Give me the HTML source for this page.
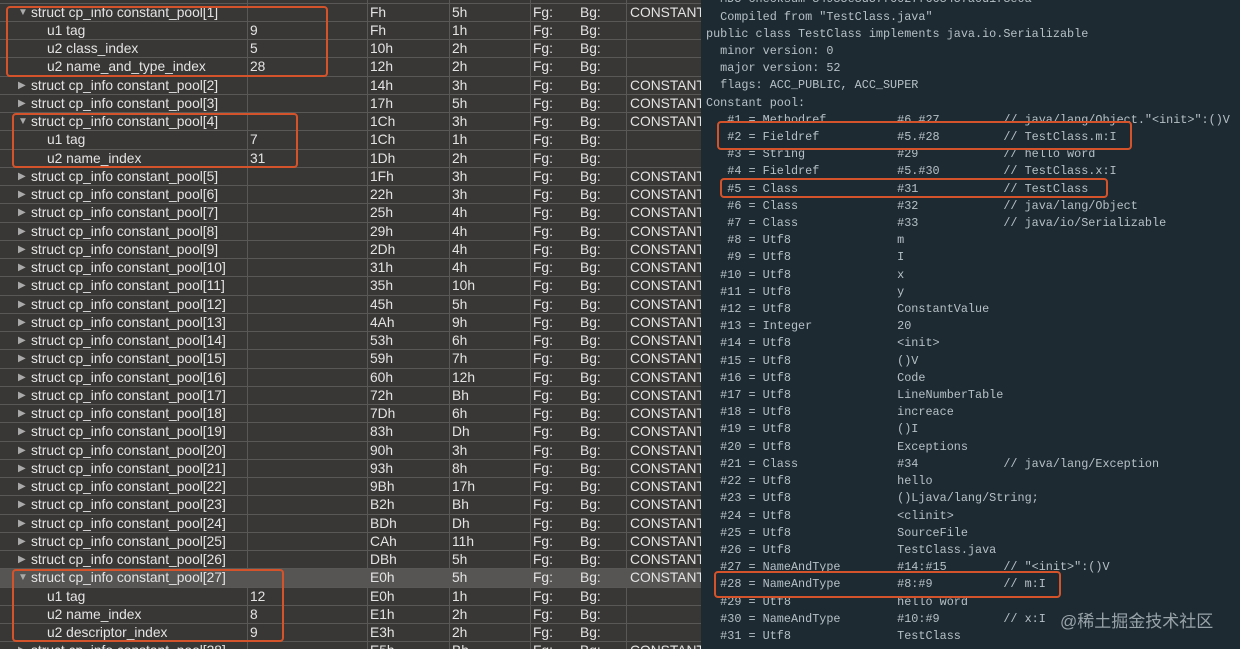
<!DOCTYPE html>
<html><head><meta charset="utf-8"><style>
*{margin:0;padding:0;box-sizing:border-box}
html,body{width:1240px;height:649px;overflow:hidden}
body{background:#1e2a32;position:relative;font-family:"Liberation Sans",sans-serif}
#left{position:absolute;left:0;top:0;width:701px;height:649px;background:#393735;overflow:hidden}
#rows{position:absolute;left:0;top:-14.76px;width:701px}
.r{height:18.26px;border-bottom:1px solid #5a5856;position:relative;font-size:13.8px;color:#e4e4e4;line-height:18px;white-space:nowrap}
.r span{position:absolute;top:0}
.n{left:31px}.c .n{left:47px}
.t{left:18px;font-size:10px;color:#aaa}
.v{left:250px}.s{left:370px}.z{left:452px}.fg{left:533px}.bg{left:580px}.k{left:630px}
.sel{background:#575553}
.vl{position:absolute;top:0;width:1px;height:649px;background:#5a5856}
#term{position:absolute;left:706px;top:-8.6px;font-family:"Liberation Mono",monospace;font-size:11.8px;line-height:17.2px;color:#b5c1c6;white-space:pre}
.box{position:absolute;border:2.5px solid #d4532a;border-radius:4px}
#wm{position:absolute;left:1060px;top:607px;font-family:"Liberation Sans","Noto Sans CJK SC",sans-serif;font-size:17px;color:#97a3a8}
</style></head><body>
<div id="left">
<div class="vl" style="left:247px"></div><div class="vl" style="left:367px"></div><div class="vl" style="left:449px"></div><div class="vl" style="left:530px"></div><div class="vl" style="left:626px"></div>
<div id="rows">
<div class="r"></div>
<div class="r"><span class="t">▼</span><span class="n">struct cp_info constant_pool[1]</span><span class="s">Fh</span><span class="z">5h</span><span class="fg">Fg:</span><span class="bg">Bg:</span><span class="k">CONSTANT</span></div>
<div class="r c"><span class="n">u1 tag</span><span class="v">9</span><span class="s">Fh</span><span class="z">1h</span><span class="fg">Fg:</span><span class="bg">Bg:</span></div>
<div class="r c"><span class="n">u2 class_index</span><span class="v">5</span><span class="s">10h</span><span class="z">2h</span><span class="fg">Fg:</span><span class="bg">Bg:</span></div>
<div class="r c"><span class="n">u2 name_and_type_index</span><span class="v">28</span><span class="s">12h</span><span class="z">2h</span><span class="fg">Fg:</span><span class="bg">Bg:</span></div>
<div class="r"><span class="t">▶</span><span class="n">struct cp_info constant_pool[2]</span><span class="s">14h</span><span class="z">3h</span><span class="fg">Fg:</span><span class="bg">Bg:</span><span class="k">CONSTANT</span></div>
<div class="r"><span class="t">▶</span><span class="n">struct cp_info constant_pool[3]</span><span class="s">17h</span><span class="z">5h</span><span class="fg">Fg:</span><span class="bg">Bg:</span><span class="k">CONSTANT</span></div>
<div class="r"><span class="t">▼</span><span class="n">struct cp_info constant_pool[4]</span><span class="s">1Ch</span><span class="z">3h</span><span class="fg">Fg:</span><span class="bg">Bg:</span><span class="k">CONSTANT</span></div>
<div class="r c"><span class="n">u1 tag</span><span class="v">7</span><span class="s">1Ch</span><span class="z">1h</span><span class="fg">Fg:</span><span class="bg">Bg:</span></div>
<div class="r c"><span class="n">u2 name_index</span><span class="v">31</span><span class="s">1Dh</span><span class="z">2h</span><span class="fg">Fg:</span><span class="bg">Bg:</span></div>
<div class="r"><span class="t">▶</span><span class="n">struct cp_info constant_pool[5]</span><span class="s">1Fh</span><span class="z">3h</span><span class="fg">Fg:</span><span class="bg">Bg:</span><span class="k">CONSTANT</span></div>
<div class="r"><span class="t">▶</span><span class="n">struct cp_info constant_pool[6]</span><span class="s">22h</span><span class="z">3h</span><span class="fg">Fg:</span><span class="bg">Bg:</span><span class="k">CONSTANT</span></div>
<div class="r"><span class="t">▶</span><span class="n">struct cp_info constant_pool[7]</span><span class="s">25h</span><span class="z">4h</span><span class="fg">Fg:</span><span class="bg">Bg:</span><span class="k">CONSTANT</span></div>
<div class="r"><span class="t">▶</span><span class="n">struct cp_info constant_pool[8]</span><span class="s">29h</span><span class="z">4h</span><span class="fg">Fg:</span><span class="bg">Bg:</span><span class="k">CONSTANT</span></div>
<div class="r"><span class="t">▶</span><span class="n">struct cp_info constant_pool[9]</span><span class="s">2Dh</span><span class="z">4h</span><span class="fg">Fg:</span><span class="bg">Bg:</span><span class="k">CONSTANT</span></div>
<div class="r"><span class="t">▶</span><span class="n">struct cp_info constant_pool[10]</span><span class="s">31h</span><span class="z">4h</span><span class="fg">Fg:</span><span class="bg">Bg:</span><span class="k">CONSTANT</span></div>
<div class="r"><span class="t">▶</span><span class="n">struct cp_info constant_pool[11]</span><span class="s">35h</span><span class="z">10h</span><span class="fg">Fg:</span><span class="bg">Bg:</span><span class="k">CONSTANT</span></div>
<div class="r"><span class="t">▶</span><span class="n">struct cp_info constant_pool[12]</span><span class="s">45h</span><span class="z">5h</span><span class="fg">Fg:</span><span class="bg">Bg:</span><span class="k">CONSTANT</span></div>
<div class="r"><span class="t">▶</span><span class="n">struct cp_info constant_pool[13]</span><span class="s">4Ah</span><span class="z">9h</span><span class="fg">Fg:</span><span class="bg">Bg:</span><span class="k">CONSTANT</span></div>
<div class="r"><span class="t">▶</span><span class="n">struct cp_info constant_pool[14]</span><span class="s">53h</span><span class="z">6h</span><span class="fg">Fg:</span><span class="bg">Bg:</span><span class="k">CONSTANT</span></div>
<div class="r"><span class="t">▶</span><span class="n">struct cp_info constant_pool[15]</span><span class="s">59h</span><span class="z">7h</span><span class="fg">Fg:</span><span class="bg">Bg:</span><span class="k">CONSTANT</span></div>
<div class="r"><span class="t">▶</span><span class="n">struct cp_info constant_pool[16]</span><span class="s">60h</span><span class="z">12h</span><span class="fg">Fg:</span><span class="bg">Bg:</span><span class="k">CONSTANT</span></div>
<div class="r"><span class="t">▶</span><span class="n">struct cp_info constant_pool[17]</span><span class="s">72h</span><span class="z">Bh</span><span class="fg">Fg:</span><span class="bg">Bg:</span><span class="k">CONSTANT</span></div>
<div class="r"><span class="t">▶</span><span class="n">struct cp_info constant_pool[18]</span><span class="s">7Dh</span><span class="z">6h</span><span class="fg">Fg:</span><span class="bg">Bg:</span><span class="k">CONSTANT</span></div>
<div class="r"><span class="t">▶</span><span class="n">struct cp_info constant_pool[19]</span><span class="s">83h</span><span class="z">Dh</span><span class="fg">Fg:</span><span class="bg">Bg:</span><span class="k">CONSTANT</span></div>
<div class="r"><span class="t">▶</span><span class="n">struct cp_info constant_pool[20]</span><span class="s">90h</span><span class="z">3h</span><span class="fg">Fg:</span><span class="bg">Bg:</span><span class="k">CONSTANT</span></div>
<div class="r"><span class="t">▶</span><span class="n">struct cp_info constant_pool[21]</span><span class="s">93h</span><span class="z">8h</span><span class="fg">Fg:</span><span class="bg">Bg:</span><span class="k">CONSTANT</span></div>
<div class="r"><span class="t">▶</span><span class="n">struct cp_info constant_pool[22]</span><span class="s">9Bh</span><span class="z">17h</span><span class="fg">Fg:</span><span class="bg">Bg:</span><span class="k">CONSTANT</span></div>
<div class="r"><span class="t">▶</span><span class="n">struct cp_info constant_pool[23]</span><span class="s">B2h</span><span class="z">Bh</span><span class="fg">Fg:</span><span class="bg">Bg:</span><span class="k">CONSTANT</span></div>
<div class="r"><span class="t">▶</span><span class="n">struct cp_info constant_pool[24]</span><span class="s">BDh</span><span class="z">Dh</span><span class="fg">Fg:</span><span class="bg">Bg:</span><span class="k">CONSTANT</span></div>
<div class="r"><span class="t">▶</span><span class="n">struct cp_info constant_pool[25]</span><span class="s">CAh</span><span class="z">11h</span><span class="fg">Fg:</span><span class="bg">Bg:</span><span class="k">CONSTANT</span></div>
<div class="r"><span class="t">▶</span><span class="n">struct cp_info constant_pool[26]</span><span class="s">DBh</span><span class="z">5h</span><span class="fg">Fg:</span><span class="bg">Bg:</span><span class="k">CONSTANT</span></div>
<div class="r sel"><span class="t">▼</span><span class="n">struct cp_info constant_pool[27]</span><span class="s">E0h</span><span class="z">5h</span><span class="fg">Fg:</span><span class="bg">Bg:</span><span class="k">CONSTANT</span></div>
<div class="r c"><span class="n">u1 tag</span><span class="v">12</span><span class="s">E0h</span><span class="z">1h</span><span class="fg">Fg:</span><span class="bg">Bg:</span></div>
<div class="r c"><span class="n">u2 name_index</span><span class="v">8</span><span class="s">E1h</span><span class="z">2h</span><span class="fg">Fg:</span><span class="bg">Bg:</span></div>
<div class="r c"><span class="n">u2 descriptor_index</span><span class="v">9</span><span class="s">E3h</span><span class="z">2h</span><span class="fg">Fg:</span><span class="bg">Bg:</span></div>
<div class="r"><span class="t">▶</span><span class="n">struct cp_info constant_pool[28]</span><span class="s">E5h</span><span class="z">Bh</span><span class="fg">Fg:</span><span class="bg">Bg:</span><span class="k">CONSTANT</span></div>
</div>
</div>
<div id="term">  MD5 checksum 34935e3d57f6027f663457a0d1f3e0a
  Compiled from "TestClass.java"
public class TestClass implements java.io.Serializable
  minor version: 0
  major version: 52
  flags: ACC_PUBLIC, ACC_SUPER
Constant pool:
   #1 = Methodref          #6.#27         // java/lang/Object."&lt;init&gt;":()V
   #2 = Fieldref           #5.#28         // TestClass.m:I
   #3 = String             #29            // hello word
   #4 = Fieldref           #5.#30         // TestClass.x:I
   #5 = Class              #31            // TestClass
   #6 = Class              #32            // java/lang/Object
   #7 = Class              #33            // java/io/Serializable
   #8 = Utf8               m
   #9 = Utf8               I
  #10 = Utf8               x
  #11 = Utf8               y
  #12 = Utf8               ConstantValue
  #13 = Integer            20
  #14 = Utf8               &lt;init&gt;
  #15 = Utf8               ()V
  #16 = Utf8               Code
  #17 = Utf8               LineNumberTable
  #18 = Utf8               increace
  #19 = Utf8               ()I
  #20 = Utf8               Exceptions
  #21 = Class              #34            // java/lang/Exception
  #22 = Utf8               hello
  #23 = Utf8               ()Ljava/lang/String;
  #24 = Utf8               &lt;clinit&gt;
  #25 = Utf8               SourceFile
  #26 = Utf8               TestClass.java
  #27 = NameAndType        #14:#15        // "&lt;init&gt;":()V
  #28 = NameAndType        #8:#9          // m:I
  #29 = Utf8               hello word
  #30 = NameAndType        #10:#9         // x:I
  #31 = Utf8               TestClass</div>
<div class="box" style="left:6px;top:6px;width:322px;height:71px"></div>
<div class="box" style="left:12px;top:113px;width:286px;height:55px"></div>
<div class="box" style="left:12px;top:569px;width:272px;height:73px"></div>
<div class="box" style="left:717px;top:121px;width:415px;height:29px"></div>
<div class="box" style="left:720px;top:178px;width:388px;height:20px"></div>
<div class="box" style="left:714px;top:571px;width:347px;height:27px"></div>
<div id="wm">@稀土掘金技术社区</div>
</body></html>
